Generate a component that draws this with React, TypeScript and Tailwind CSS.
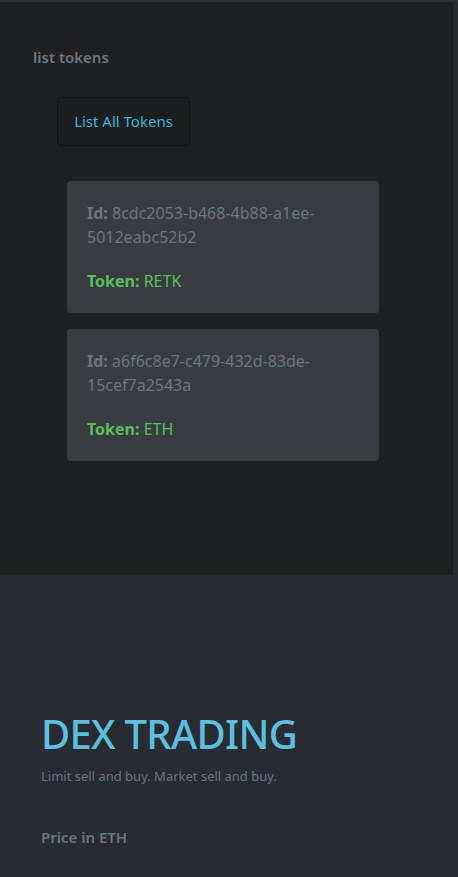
import React from "react";

const tokens = [
  { id: "8cdc2053-b468-4b88-a1ee-5012eabc52b2", token: "RETK" },
  { id: "a6f6c8e7-c479-432d-83de-15cef7a2543a", token: "ETH" },
];

export default function App() {
  return (
    <div
      className="min-h-[877px] w-full bg-[#282b31] border-t-2 border-[#2b2f3b]"
      style={{ fontFamily: '"Noto Sans", "Open Sans", sans-serif' }}
    >
      <div className="w-[453px] h-[573px] bg-[#1f2022] pt-[44px] pl-[33px]">
        <h2 className="text-[15px] leading-[22px] font-semibold text-[#6c757d]">list tokens</h2>
        <div className="pl-[24px] pt-[29px]">
          <button className="w-[133px] h-[49px] rounded border border-[#111213] bg-[#1d1e20] text-[15px] text-[#3bb6d8]">
            List All Tokens
          </button>
          <div className="pl-[10px] pt-[35px] flex flex-col gap-4">
            {tokens.map((t) => (
              <div key={t.id} className="w-[312px] rounded bg-[#383c41] p-5 text-[16px] leading-6">
                <p className="mb-5 text-[#6c757d] break-words">
                  <span className="font-bold">Id:</span> {t.id.slice(0, 24)}
                  <br />
                  {t.id.slice(24)}
                </p>
                <p className="text-[#55c05a]">
                  <span className="font-bold">Token:</span> {t.token}
                </p>
              </div>
            ))}
          </div>
        </div>
      </div>
      <div className="pl-[41px] pt-[134px]">
        <h1 className="text-[40px] leading-[50px] font-medium tracking-[-0.7px] text-[#5bc0de]">DEX TRADING</h1>
        <p className="mt-[7px] text-[13px] leading-5 text-[#6c757d]">Limit sell and buy. Market sell and buy.</p>
        <h3 className="mt-[40px] text-[15px] leading-[22px] font-semibold text-[#6c757d]">Price in ETH</h3>
      </div>
    </div>
  );
}
